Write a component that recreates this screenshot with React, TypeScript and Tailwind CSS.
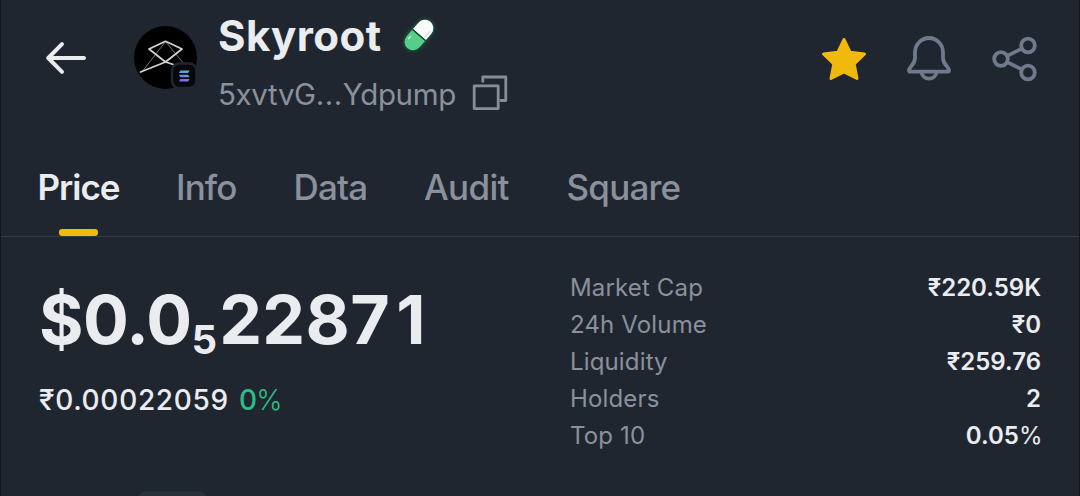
import clsx from 'clsx';

const tabs = [
  { label: 'Price', className: 'w-[81px] tracking-[-1px]' },
  { label: 'Info', className: 'w-[60px] tracking-[-0.9px]' },
  { label: 'Data', className: 'w-[73px] tracking-[-0.8px]' },
  { label: 'Audit', className: 'w-[85px] tracking-[-0.7px]' },
  { label: 'Square', className: 'w-[113px] tracking-[-0.8px]' },
];

const stats = [
  { label: 'Market Cap', value: '₹220.59', unit: 'K' },
  { label: '24h Volume', value: '₹0' },
  { label: 'Liquidity', value: '₹259.76' },
  { label: 'Holders', value: '2' },
  { label: 'Top 10', value: '0.05', unit: '%' },
];

function BackIcon() {
  return (
    <svg width="42" height="34" viewBox="0 0 42 34" fill="none" stroke="#eaecef" strokeWidth="4" strokeLinecap="round" strokeLinejoin="round">
      <path d="M39 17H3.5M17 3.2L3.2 17L17 30.8" />
    </svg>
  );
}

function SolanaBadge() {
  return (
    <svg className="absolute left-[36px] top-[36px]" width="28" height="28" viewBox="0 0 28 28">
      <defs>
        <linearGradient id="solana" x1="20" y1="6" x2="8" y2="20" gradientUnits="userSpaceOnUse">
          <stop stopColor="#2ee6a8" />
          <stop offset="0.5" stopColor="#6c8fe0" />
          <stop offset="1" stopColor="#9a4cf5" />
        </linearGradient>
      </defs>
      <rect x="2" y="1.5" width="24.500" height="24.500" rx="7" fill="#07080b" stroke="#20262f" strokeWidth="2.500" />
      <g fill="url(#solana)">
        <path d="M10.300 8.500h9.200l-1.400 2.400H8.900z" />
        <path d="M8.900 12.800h9.200l1.400 2.400h-9.200z" />
        <path d="M10.300 17.100h9.200l-1.400 2.400H8.900z" />
      </g>
    </svg>
  );
}

function TokenAvatar() {
  return (
    <div className="relative size-[63px] rounded-full bg-black">
      <svg width="63" height="63" viewBox="0 0 63 63" fill="none" strokeLinejoin="round" strokeLinecap="round">
        <path d="M31.500 15.500L8 46M31.500 15.500L51 39" stroke="#707070" strokeWidth="1" />
        <path d="M31.500 15.300L15 23L31.500 36L48 23Z" stroke="#d2d2d2" strokeWidth="1.800" />
        <path d="M31.500 36L6.500 46M31.500 36L44 40" stroke="#d2d2d2" strokeWidth="1.800" />
      </svg>
      <SolanaBadge />
    </div>
  );
}

function PillIcon() {
  return (
    <svg className="drop-shadow-[0_0_2px_#16824e]" width="36" height="38" viewBox="0 0 36 38">
      <g transform="rotate(41 18 19)">
        <path d="M9.500 18.500V10a8.500 8.500 0 0 1 17 0v8.500z" fill="#fafafa" />
        <path d="M9.500 19.500V28a8.500 8.500 0 0 0 17 0v-8.500z" fill="#55cf88" />
        <path d="M9.500 19h17" stroke="#17452f" strokeWidth="1.400" />
        <path d="M24 9.500v7" stroke="#d5d9db" strokeWidth="1.200" strokeLinecap="round" />
        <path d="M12.600 26v2.400" stroke="#c9f7dc" strokeWidth="1.400" strokeLinecap="round" />
      </g>
    </svg>
  );
}

function CopyIcon() {
  return (
    <svg width="36" height="36" viewBox="0 0 36 36" fill="none" stroke="#868d99" strokeWidth="2.800" strokeLinejoin="round">
      <path d="M2.200 10.800h24v22.800h-24z" />
      <path d="M10.800 7.500V2h23v23.500h-6" />
    </svg>
  );
}

function StarIcon() {
  return (
    <svg width="46" height="44" viewBox="0 0 46 44" fill="#f0b90b" stroke="#f0b90b" strokeWidth="3" strokeLinejoin="round">
      <path d="M23 2.500L29 15.200L43.500 17L33.200 27L36 41.500L23 35L10 41.500L12.800 27L2.500 17L17 15.200Z" />
    </svg>
  );
}

function BellIcon() {
  return (
    <svg width="46" height="48" viewBox="0 0 46 48" fill="none" stroke="#707a8c" strokeWidth="3.800" strokeLinejoin="round">
      <path d="M9 17.500a14 14.500 0 0 1 28 0V23c0 7 6 8.500 6 12.500c0 .7-.4 1.100-1.100 1.100H4.100c-.7 0-1.100-.4-1.100-1.100C3 31.500 9 30 9 23Z" />
      <path d="M15.300 37a7.800 7.800 0 0 0 15.400 0" />
    </svg>
  );
}

function ShareIcon() {
  return (
    <svg width="46" height="46" viewBox="0 0 46 46" fill="none" stroke="#707a8c" strokeWidth="3.800">
      <circle cx="9" cy="23" r="6.800" />
      <circle cx="36" cy="9.500" r="6.800" />
      <circle cx="36" cy="36.500" r="6.800" />
      <path d="M15.200 19.900L29.800 12.600M15.200 26.100L29.800 33.400" />
    </svg>
  );
}

function Header() {
  return (
    <header className="flex h-[166px] shrink-0 items-start pl-[44px] pr-[41px]">
      <button className="mt-[41px] w-[42px]" aria-label="Back">
        <BackIcon />
      </button>
      <div className="ml-[47px] mt-[26px]">
        <TokenAvatar />
      </div>
      <div className="ml-[21px] mt-[16px]">
        <div className="flex h-[40px] items-start">
          <h1 className="w-[183px] whitespace-nowrap text-[42px] font-bold leading-[40px] tracking-[0.450px]">Skyroot</h1>
          <PillIcon />
        </div>
        <div className="mt-[19px] flex items-start">
          <span className="w-[254px] whitespace-nowrap text-[29.500px] leading-[38px] tracking-[-0.350px] text-[#8a919c]">
            5xvtvG<span className="tracking-[0.500px]">...</span>Ydpump
          </span>
          <CopyIcon />
        </div>
      </div>
      <div className="ml-auto flex items-start">
        <div className="mt-[37px]">
          <StarIcon />
        </div>
        <div className="ml-[39px] mt-[35px]">
          <BellIcon />
        </div>
        <div className="ml-[40px] mt-[36px]">
          <ShareIcon />
        </div>
      </div>
    </header>
  );
}

function Tabs() {
  return (
    <nav className="flex h-[71px] shrink-0 gap-[57.500px] border-b border-[#333b47] pl-[36.500px]">
      {tabs.map((tab, i) => (
        <div key={tab.label} className={clsx('flex shrink-0 flex-col', tab.className)}>
          <span className={clsx('whitespace-nowrap text-[35px] leading-[43px]', i === 0 ? 'font-semibold' : 'font-medium text-[#8a919c]')}>
            {tab.label}
          </span>
          {i === 0 && <span className="mt-[20px] h-[7px] w-[39px] self-center rounded-[3px] bg-[#f0b90b]" />}
        </div>
      ))}
    </nav>
  );
}

function PriceBlock() {
  return (
    <div className="w-[569px] shrink-0 pl-[38px] pt-[42px]">
      <div className="flex h-[80px] whitespace-nowrap text-[68px] font-bold leading-[80px]">
        <span className="tracking-[-0.600px]">$0.0</span>
        <span className="mt-[21px] text-[40px]">5</span>
        <span className="ml-[2px] tracking-[0.400px]">2287</span>
        <span className="ml-[6px]">1</span>
      </div>
      <div className="mt-[23px] flex gap-[10px] whitespace-nowrap text-[28px] font-medium leading-[36px]">
        <span className="tracking-[0.700px]">₹0.00022059</span>
        <span className="tracking-[-0.800px] text-[#2ebd85]">
          0<span className="font-light">%</span>
        </span>
      </div>
    </div>
  );
}

function Stats() {
  return (
    <dl className="flex-1 pr-[38px] pt-[32px]">
      {stats.map((stat) => (
        <div key={stat.label} className="flex h-[37px] justify-between leading-[37px]">
          <dt className="text-[24px] tracking-[0.150px] text-[#8a919c]">{stat.label}</dt>
          <dd className="text-[24px] font-semibold">
            {stat.value}
            {stat.unit && <span className={clsx(stat.unit === '%' && 'font-normal tracking-[-1.500px]')}>{stat.unit}</span>}
          </dd>
        </div>
      ))}
    </dl>
  );
}

export default function App() {
  return (
    <div className="flex h-[496px] w-[1080px] flex-col overflow-hidden border-x border-[#12161c] bg-[#202630] font-[Inter,sans-serif] text-[#eaecef]">
      <Header />
      <Tabs />
      <main className="flex h-[254px] shrink-0">
        <PriceBlock />
        <Stats />
      </main>
      <div className="ml-[135px] h-[30px] w-[73px] shrink-0 rounded-[12px] bg-[#29313d]" />
    </div>
  );
}
